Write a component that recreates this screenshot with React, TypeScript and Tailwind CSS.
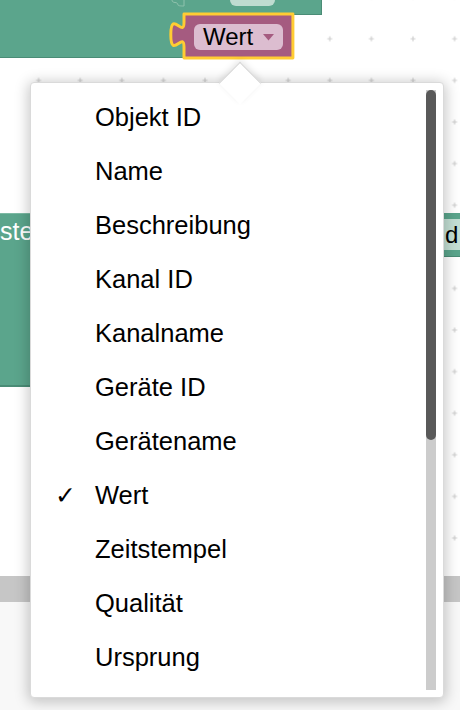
import React from 'react';

const OPTIONS = [
  'Objekt ID',
  'Name',
  'Beschreibung',
  'Kanal ID',
  'Kanalname',
  'Geräte ID',
  'Gerätename',
  'Wert',
  'Zeitstempel',
  'Qualität',
  'Ursprung',
];

const SELECTED = 'Wert';

function GridDots() {
  return (
    <svg className="absolute inset-0 w-full h-full" aria-hidden>
      <defs>
        <pattern id="grid" width="41.6" height="41.6" patternUnits="userSpaceOnUse" x="17.8" y="18">
          <path d="M18.3 20.8h5M20.8 18.3v5" stroke="#cfcfcf" strokeWidth="1.2" />
        </pattern>
      </defs>
      <rect width="100%" height="100%" fill="url(#grid)" />
    </svg>
  );
}

// selected value block with Blockly-style output tab
function ValueBlock() {
  return (
    <div className="absolute left-[170px] top-[10px] w-[130px] h-[52px]">
      <svg className="absolute inset-0 overflow-visible" width="130" height="52" aria-hidden>
        <g transform="translate(14 4) scale(1.65)">
          <path
            d="M0,0 H66 V26.7 H0 V20 C0,10 -8,28 -8,12.5 C-8,-3 0,15 0,5 Z"
            fill="#a55b80"
            stroke="#ffcc33"
            strokeWidth="1.8"
            strokeLinejoin="round"
          />
        </g>
      </svg>
      <div className="relative ml-[24px] mt-[14px] w-[89px] h-[26px] rounded-[6px] bg-[#dcbdd0] flex items-center pl-[9px] gap-[10px]">
        <span className="text-[24px] leading-none text-black font-['Liberation_Sans',Arial,sans-serif]">Wert</span>
        <svg width="11" height="7" viewBox="0 0 11 7" aria-hidden>
          <path d="M0 0h11L5.5 6.5z" fill="#a55b80" />
        </svg>
      </div>
    </div>
  );
}

function Workspace() {
  return (
    <div className="relative h-[576px] shrink-0 bg-white">
      <GridDots />

      {/* parent block, top left */}
      <div className="absolute left-0 top-0 flex items-start">
        <div className="w-[184px] h-[58px] bg-[#5ba58c] border-b border-[#4a8c76]" />
        <div className="relative w-[138px] h-[15px] bg-[#5ba58c] border-b border-r border-[#4a8c76]">
          <div className="ml-[46px] -mt-[6px] w-[45px] h-[12px] rounded-[6px] bg-[#bfdcd0]" />
        </div>
      </div>
      <svg className="absolute left-[168px] top-0" width="20" height="8" aria-hidden>
        <path d="M4 0 C4 4 10 1 10 5 C10 6 14 6 16 6 V0" fill="none" stroke="#8fc2ad" strokeWidth="1" />
      </svg>
      <ValueBlock />

      {/* block behind menu, left */}
      <div className="absolute left-0 top-[213px] w-[60px] h-[174px] bg-[#5ba58c] border-t border-[#7dbaa4] border-b-2 border-b-[#4a8c76] overflow-hidden">
        <span className="block pt-[5px] text-[25px] leading-none text-white font-['Liberation_Sans',Arial,sans-serif]">ste</span>
      </div>

      {/* block behind menu, right */}
      <div className="absolute left-[400px] top-[213px] w-[80px] h-[44px] bg-[#5ba58c] py-[6px] border-b border-[#4a8c76]">
        <div className="h-full bg-[#c3dfd4] flex items-center pl-[45px] text-[24px] leading-none text-black font-['Liberation_Sans',Arial,sans-serif]">
          d
        </div>
      </div>
    </div>
  );
}

function DropdownMenu() {
  return (
    <>
      <div className="absolute left-[30px] top-[82px] w-[414px] h-[616px] bg-white rounded-[4px] border border-[#dadada] shadow-[0_2px_14px_2px_rgba(0,0,0,0.22)]">
        <ul className="pt-[7px] font-['Liberation_Sans',Arial,sans-serif]">
          {OPTIONS.map((label) => (
            <li key={label} className="h-[54px] flex items-center text-[25.5px] text-black">
              <span className="w-[64px] flex justify-end pr-[19px] text-[25px] leading-none font-['DejaVu_Sans',sans-serif]">
                {label === SELECTED ? '✓' : ''}
              </span>
              {label}
            </li>
          ))}
        </ul>
        <div className="absolute right-[7px] top-[7px] bottom-[7px] w-[10px] bg-[#cccccc]">
          <div className="h-[350px] rounded-[5px] bg-[#595959]" />
        </div>
      </div>
      {/* pointer arrow */}
      <div className="absolute left-[225px] top-[68px] w-[30px] h-[30px] rotate-45 bg-white border-t border-l border-[#d4d4d4] shadow-[-2px_-2px_6px_rgba(0,0,0,0.1)]" />
    </>
  );
}

export default function App() {
  return (
    <div className="relative w-[460px] h-[710px] overflow-hidden flex flex-col bg-[#f8f8f8]">
      <Workspace />
      <div className="h-[26px] shrink-0 bg-[#c6c6c6]" />
      <div className="flex-1" />
      <DropdownMenu />
    </div>
  );
}
